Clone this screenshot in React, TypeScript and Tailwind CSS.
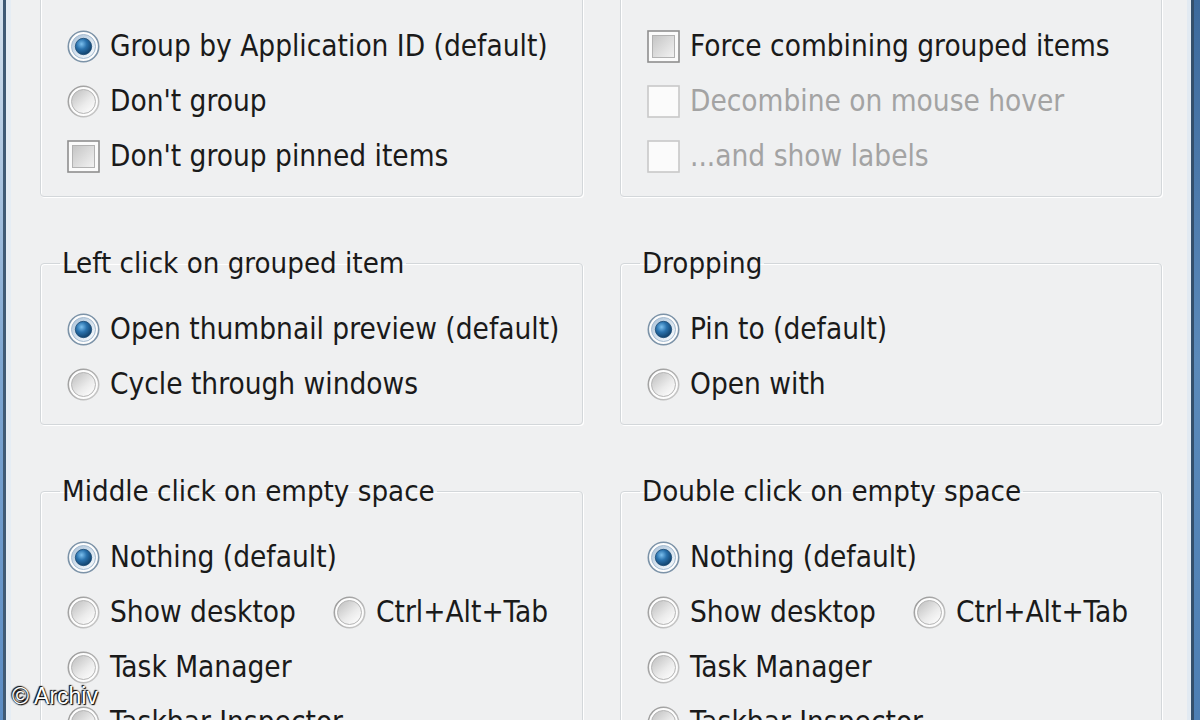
import React from "react";

const FONT = "font-['DejaVu_Sans_Condensed','DejaVu_Sans',sans-serif]";

function Radio({ checked }: { checked?: boolean }) {
  return (
    <svg width="33" height="33" viewBox="0 0 33 33" className="shrink-0">
      <defs>
        <linearGradient id="rOuter" x1="0" y1="0" x2="1" y2="1">
          <stop offset="0" stopColor="#969696" />
          <stop offset="1" stopColor="#cdcdcd" />
        </linearGradient>
        <linearGradient id="rBowl" x1="0.15" y1="0.1" x2="0.85" y2="0.9">
          <stop offset="0" stopColor="#c6c6c6" />
          <stop offset="0.6" stopColor="#ebebeb" />
          <stop offset="1" stopColor="#fbfbfb" />
        </linearGradient>
        <linearGradient id="rBowlSel" x1="0.15" y1="0.1" x2="0.85" y2="0.9">
          <stop offset="0" stopColor="#b4c9dd" />
          <stop offset="1" stopColor="#f2f7fb" />
        </linearGradient>
        <radialGradient id="rDot" cx="0.38" cy="0.35" r="0.7">
          <stop offset="0" stopColor="#7cc0ee" />
          <stop offset="0.45" stopColor="#2a72ad" />
          <stop offset="1" stopColor="#0f3d66" />
        </radialGradient>
      </defs>
      <circle cx="16.5" cy="16.5" r="15.2" fill="#fdfdfd" stroke={checked ? "#7c93a8" : "url(#rOuter)"} strokeWidth="1.6" />
      <circle cx="16.5" cy="16.5" r="12" fill={checked ? "url(#rBowlSel)" : "url(#rBowl)"} stroke={checked ? "#a5bbd0" : "#b5b5b5"} strokeWidth="1" />
      {checked && <circle cx="16.5" cy="16.5" r="8.2" fill="url(#rDot)" stroke="#1a4a74" strokeWidth="0.8" />}
    </svg>
  );
}

function Check({ disabled }: { disabled?: boolean }) {
  return (
    <svg width="33" height="33" viewBox="0 0 33 33" className="shrink-0">
      <defs>
        <linearGradient id="cIn" x1="0" y1="0" x2="1" y2="1">
          <stop offset="0" stopColor="#c4c4c4" />
          <stop offset="1" stopColor="#f3f3f3" />
        </linearGradient>
      </defs>
      <rect x="1" y="1" width="31" height="31" fill="#fbfbfb" stroke={disabled ? "#c9c9c9" : "#8f8f8f"} strokeWidth="1.6" />
      {!disabled && <rect x="5.5" y="5.5" width="22" height="22" fill="url(#cIn)" stroke="#b2b2b2" strokeWidth="1" />}
    </svg>
  );
}

function Item({
  kind,
  checked,
  disabled,
  label,
  w,
}: {
  kind: "radio" | "check";
  checked?: boolean;
  disabled?: boolean;
  label: string;
  w?: string;
}) {
  return (
    <div className={`flex items-center gap-[10px] h-[55px] ${w ?? ""}`}>
      {kind === "radio" ? <Radio checked={checked} /> : <Check disabled={disabled} />}
      <span className={`whitespace-nowrap ${disabled ? "text-[#a3a3a3]" : "text-[#1a1a1a]"}`}>{label}</span>
    </div>
  );
}

function Group({ title, children }: { title: string; children: React.ReactNode }) {
  return (
    <fieldset className="border border-[#d3d7da] rounded-[4px] shadow-[inset_1px_1px_0_#ffffff,1px_1px_0_#ffffff] m-0 p-0 min-w-0">
      <legend className="ml-[19px] px-[2px] text-[#1a1a1a] text-[29.2px] leading-[36px] whitespace-nowrap">{title}</legend>
      <div className="pl-[26px] pt-[21px] pb-[12px] flex flex-col">{children}</div>
    </fieldset>
  );
}

export default function App() {
  return (
    <div className={`w-[1200px] h-[720px] overflow-hidden flex bg-[#eff0f1] text-[29.5px] ${FONT} relative`}>
      {/* left window frame */}
      <div className="flex h-full shrink-0">
        <div className="w-[3px] h-full bg-gradient-to-b from-[#d6e2ee] via-[#7fa7d2] to-[#5a8cc4]" />
        <div className="w-[3px] h-full bg-[#3f5a75]" />
        <div className="w-[5px] h-full bg-[#e6edf4]" />
      </div>

      <div className="flex-1 pl-[29px] pr-[25px] -mt-[38px] flex flex-col gap-[48px]">
        <div className="grid grid-cols-[543px_542px] gap-x-[37px]">
          <Group title="Grouping">
            <Item kind="radio" checked label="Group by Application ID (default)" />
            <Item kind="radio" label="Don't group" />
            <Item kind="check" label="Don't group pinned items" />
          </Group>
          <Group title="Combining grouped">
            <Item kind="check" label="Force combining grouped items" />
            <Item kind="check" disabled label="Decombine on mouse hover" />
            <Item kind="check" disabled label="...and show labels" />
          </Group>
        </div>

        <div className="grid grid-cols-[543px_542px] gap-x-[37px]">
          <Group title="Left click on grouped item">
            <Item kind="radio" checked label="Open thumbnail preview (default)" />
            <Item kind="radio" label="Cycle through windows" />
          </Group>
          <Group title="Dropping">
            <Item kind="radio" checked label="Pin to (default)" />
            <Item kind="radio" label="Open with" />
          </Group>
        </div>

        <div className="grid grid-cols-[543px_542px] gap-x-[37px]">
          <Group title="Middle click on empty space">
            <Item kind="radio" checked label="Nothing (default)" />
            <div className="flex">
              <Item kind="radio" label="Show desktop" w="w-[266px]" />
              <Item kind="radio" label="Ctrl+Alt+Tab" />
            </div>
            <Item kind="radio" label="Task Manager" />
            <Item kind="radio" label="Taskbar Inspector" />
          </Group>
          <Group title="Double click on empty space">
            <Item kind="radio" checked label="Nothing (default)" />
            <div className="flex">
              <Item kind="radio" label="Show desktop" w="w-[266px]" />
              <Item kind="radio" label="Ctrl+Alt+Tab" />
            </div>
            <Item kind="radio" label="Task Manager" />
            <Item kind="radio" label="Taskbar Inspector" />
          </Group>
        </div>
      </div>

      {/* right window frame */}
      <div className="flex h-full shrink-0">
        <div className="w-[4px] h-full bg-[#e2eaf2]" />
        <div className="w-[3px] h-full bg-[#34506c]" />
        <div className="w-[6px] h-full bg-gradient-to-b from-[#3d6a9c] via-[#5b8aba] to-[#4d7fb4]" />
      </div>

      <div className="absolute left-[12px] top-[683px] text-[23px] leading-[27px] text-white font-['Liberation_Sans',Arial,sans-serif] [text-shadow:0_0_2px_#000,1px_1px_1px_#000,-1px_-1px_1px_#000]">
        © Archiv
      </div>
    </div>
  );
}
